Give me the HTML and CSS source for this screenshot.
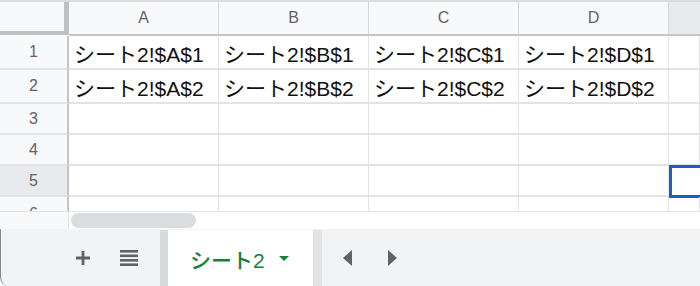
FILE: index.html
```html
<!DOCTYPE html>
<html>
<head>
    <title>シート2</title>
    <link rel="stylesheet" href="styles.css">
</head>
<body>
    <div class="window">
        <div class="grid">
            <div class="corner"></div>
            <div class="col-head">A</div>
            <div class="col-head">B</div>
            <div class="col-head">C</div>
            <div class="col-head">D</div>
            <div class="col-head col-sel"></div>

            <div class="row-head tall">1</div>
            <div class="cell tall">シート2!$A$1</div>
            <div class="cell tall">シート2!$B$1</div>
            <div class="cell tall">シート2!$C$1</div>
            <div class="cell tall">シート2!$D$1</div>
            <div class="cell tall"></div>

            <div class="row-head tall">2</div>
            <div class="cell tall">シート2!$A$2</div>
            <div class="cell tall">シート2!$B$2</div>
            <div class="cell tall">シート2!$C$2</div>
            <div class="cell tall">シート2!$D$2</div>
            <div class="cell tall"></div>

            <div class="row-head">3</div>
            <div class="cell"></div>
            <div class="cell"></div>
            <div class="cell"></div>
            <div class="cell"></div>
            <div class="cell"></div>

            <div class="row-head">4</div>
            <div class="cell"></div>
            <div class="cell"></div>
            <div class="cell"></div>
            <div class="cell"></div>
            <div class="cell"></div>

            <div class="row-head row-sel">5</div>
            <div class="cell"></div>
            <div class="cell"></div>
            <div class="cell"></div>
            <div class="cell"></div>
            <div class="cell cell-sel"></div>

            <div class="row-head cut"><span>6</span></div>
            <div class="cell cut"></div>
            <div class="cell cut"></div>
            <div class="cell cut"></div>
            <div class="cell cut"></div>
            <div class="cell cut"></div>
        </div>

        <div class="scroll-row">
            <div class="scroll-corner"></div>
            <div class="scroll-track"><div class="thumb"></div></div>
        </div>

        <div class="tabbar">
            <div class="tab-tools">
                <svg class="icon" width="14" height="14" viewBox="0 0 14 14">
                    <path d="M5.6 0h2.8v5.6H14v2.8H8.4V14H5.6V8.4H0V5.6h5.6z" fill="#5f6368"/>
                </svg>
                <svg class="icon" width="18" height="16" viewBox="0 0 18 16">
                    <rect x="0" y="0" width="18" height="2.6" fill="#5f6368"/>
                    <rect x="0" y="4.5" width="18" height="2.6" fill="#5f6368"/>
                    <rect x="0" y="9" width="18" height="2.6" fill="#5f6368"/>
                    <rect x="0" y="13.4" width="18" height="2.6" fill="#5f6368"/>
                </svg>
            </div>
            <div class="tab">
                <span class="tab-name">シート2</span>
                <svg width="10" height="5" viewBox="0 0 10 5">
                    <path d="M0 0h10L5 5z" fill="#188038"/>
                </svg>
            </div>
            <div class="tab-nav">
                <svg width="9" height="16" viewBox="0 0 9 16">
                    <path d="M9 0v16L0 8z" fill="#5f6368"/>
                </svg>
                <svg width="9" height="16" viewBox="0 0 9 16">
                    <path d="M0 0v16l9-8z" fill="#5f6368"/>
                </svg>
            </div>
        </div>
    </div>
</body>
</html>
```

FILE: styles.css
```css
body {
    margin: 0;
    padding: 0;
    background-color: #fff;
    font-family: "Liberation Sans", "Noto Sans CJK JP", Arial, sans-serif;
}

.window {
    width: 700px;
    height: 286px;
    overflow: hidden;
    border-top: 2px solid #dadce0;
    box-sizing: border-box;
}

.grid {
    display: grid;
    grid-template-columns: 69px 150px 150px 150px 150px 1fr;
    grid-template-rows: 34px 34px 34px 31px 31px 31px 14px;
}

.corner {
    background-color: #f8f9fa;
    border-right: 5px solid #c0c0c0;
    border-bottom: 4px solid #c0c0c0;
    margin-bottom: -2px;
    box-sizing: border-box;
    height: 33px;
}

.col-head {
    background-color: #f8f9fa;
    border-right: 1px solid #d6d6d6;
    border-bottom: 2px solid #c4c7c5;
    color: #5f6368;
    font-size: 16px;
    display: flex;
    align-items: center;
    justify-content: center;
    box-sizing: border-box;
}

.col-sel {
    background-color: #e8eaed;
    border-right: none;
}

.row-head {
    background-color: #f8f9fa;
    border-right: 2px solid #c4c4c4;
    border-bottom: 2px solid #e2e3e3;
    color: #5f6368;
    font-size: 16px;
    display: flex;
    align-items: center;
    justify-content: center;
    box-sizing: border-box;
}

.row-sel {
    background-color: #e8eaed;
}

.cell {
    border-right: 1px solid #e2e3e3;
    border-bottom: 2px solid #e2e3e3;
    font-size: 21px;
    color: #111;
    padding-left: 5px;
    display: flex;
    align-items: center;
    white-space: nowrap;
    overflow: hidden;
    box-sizing: border-box;
}

.cell.tall {
    padding-top: 2px;
}

.cell-sel {
    border: 3px solid #1a5fc8;
    border-right: none;
    margin-top: -1px;
    margin-bottom: -1px;
}

.cut {
    overflow: hidden;
    border-bottom: none;
    align-items: flex-start;
}

.row-head.cut span {
    display: block;
    margin-top: 8px;
}

.scroll-row {
    display: flex;
    height: 17px;
    border-top: 1px solid #e2e3e3;
}

.scroll-corner {
    width: 69px;
    background-color: #f8f9fa;
    border-right: 1px solid #e2e3e3;
    box-sizing: border-box;
}

.scroll-track {
    flex: 1;
    padding: 1px 2px 0 2px;
}

.thumb {
    width: 125px;
    height: 15px;
    border-radius: 8px;
    background-color: #dadce0;
}

.tabbar {
    display: flex;
    height: 58px;
    background-color: #f1f3f4;
    border-left: 1px solid #8a8a8a;
    border-bottom-left-radius: 10px;
    box-sizing: border-box;
}

.tab-tools {
    width: 159px;
    display: flex;
    align-items: center;
    justify-content: flex-end;
    gap: 30px;
    padding-right: 22px;
    box-sizing: border-box;
}

.tab {
    display: flex;
    align-items: center;
    gap: 14px;
    width: 162px;
    margin-top: 1px;
    padding-left: 22px;
    background-color: #fff;
    border-left: 8px solid #d9dadc;
    border-right: 9px solid #e3e4e6;
    box-sizing: border-box;
}

.tab-name {
    color: #188038;
    font-size: 21px;
    font-weight: 500;
}

.tab-nav {
    display: flex;
    align-items: center;
    gap: 36px;
    padding-left: 21px;
}
```
